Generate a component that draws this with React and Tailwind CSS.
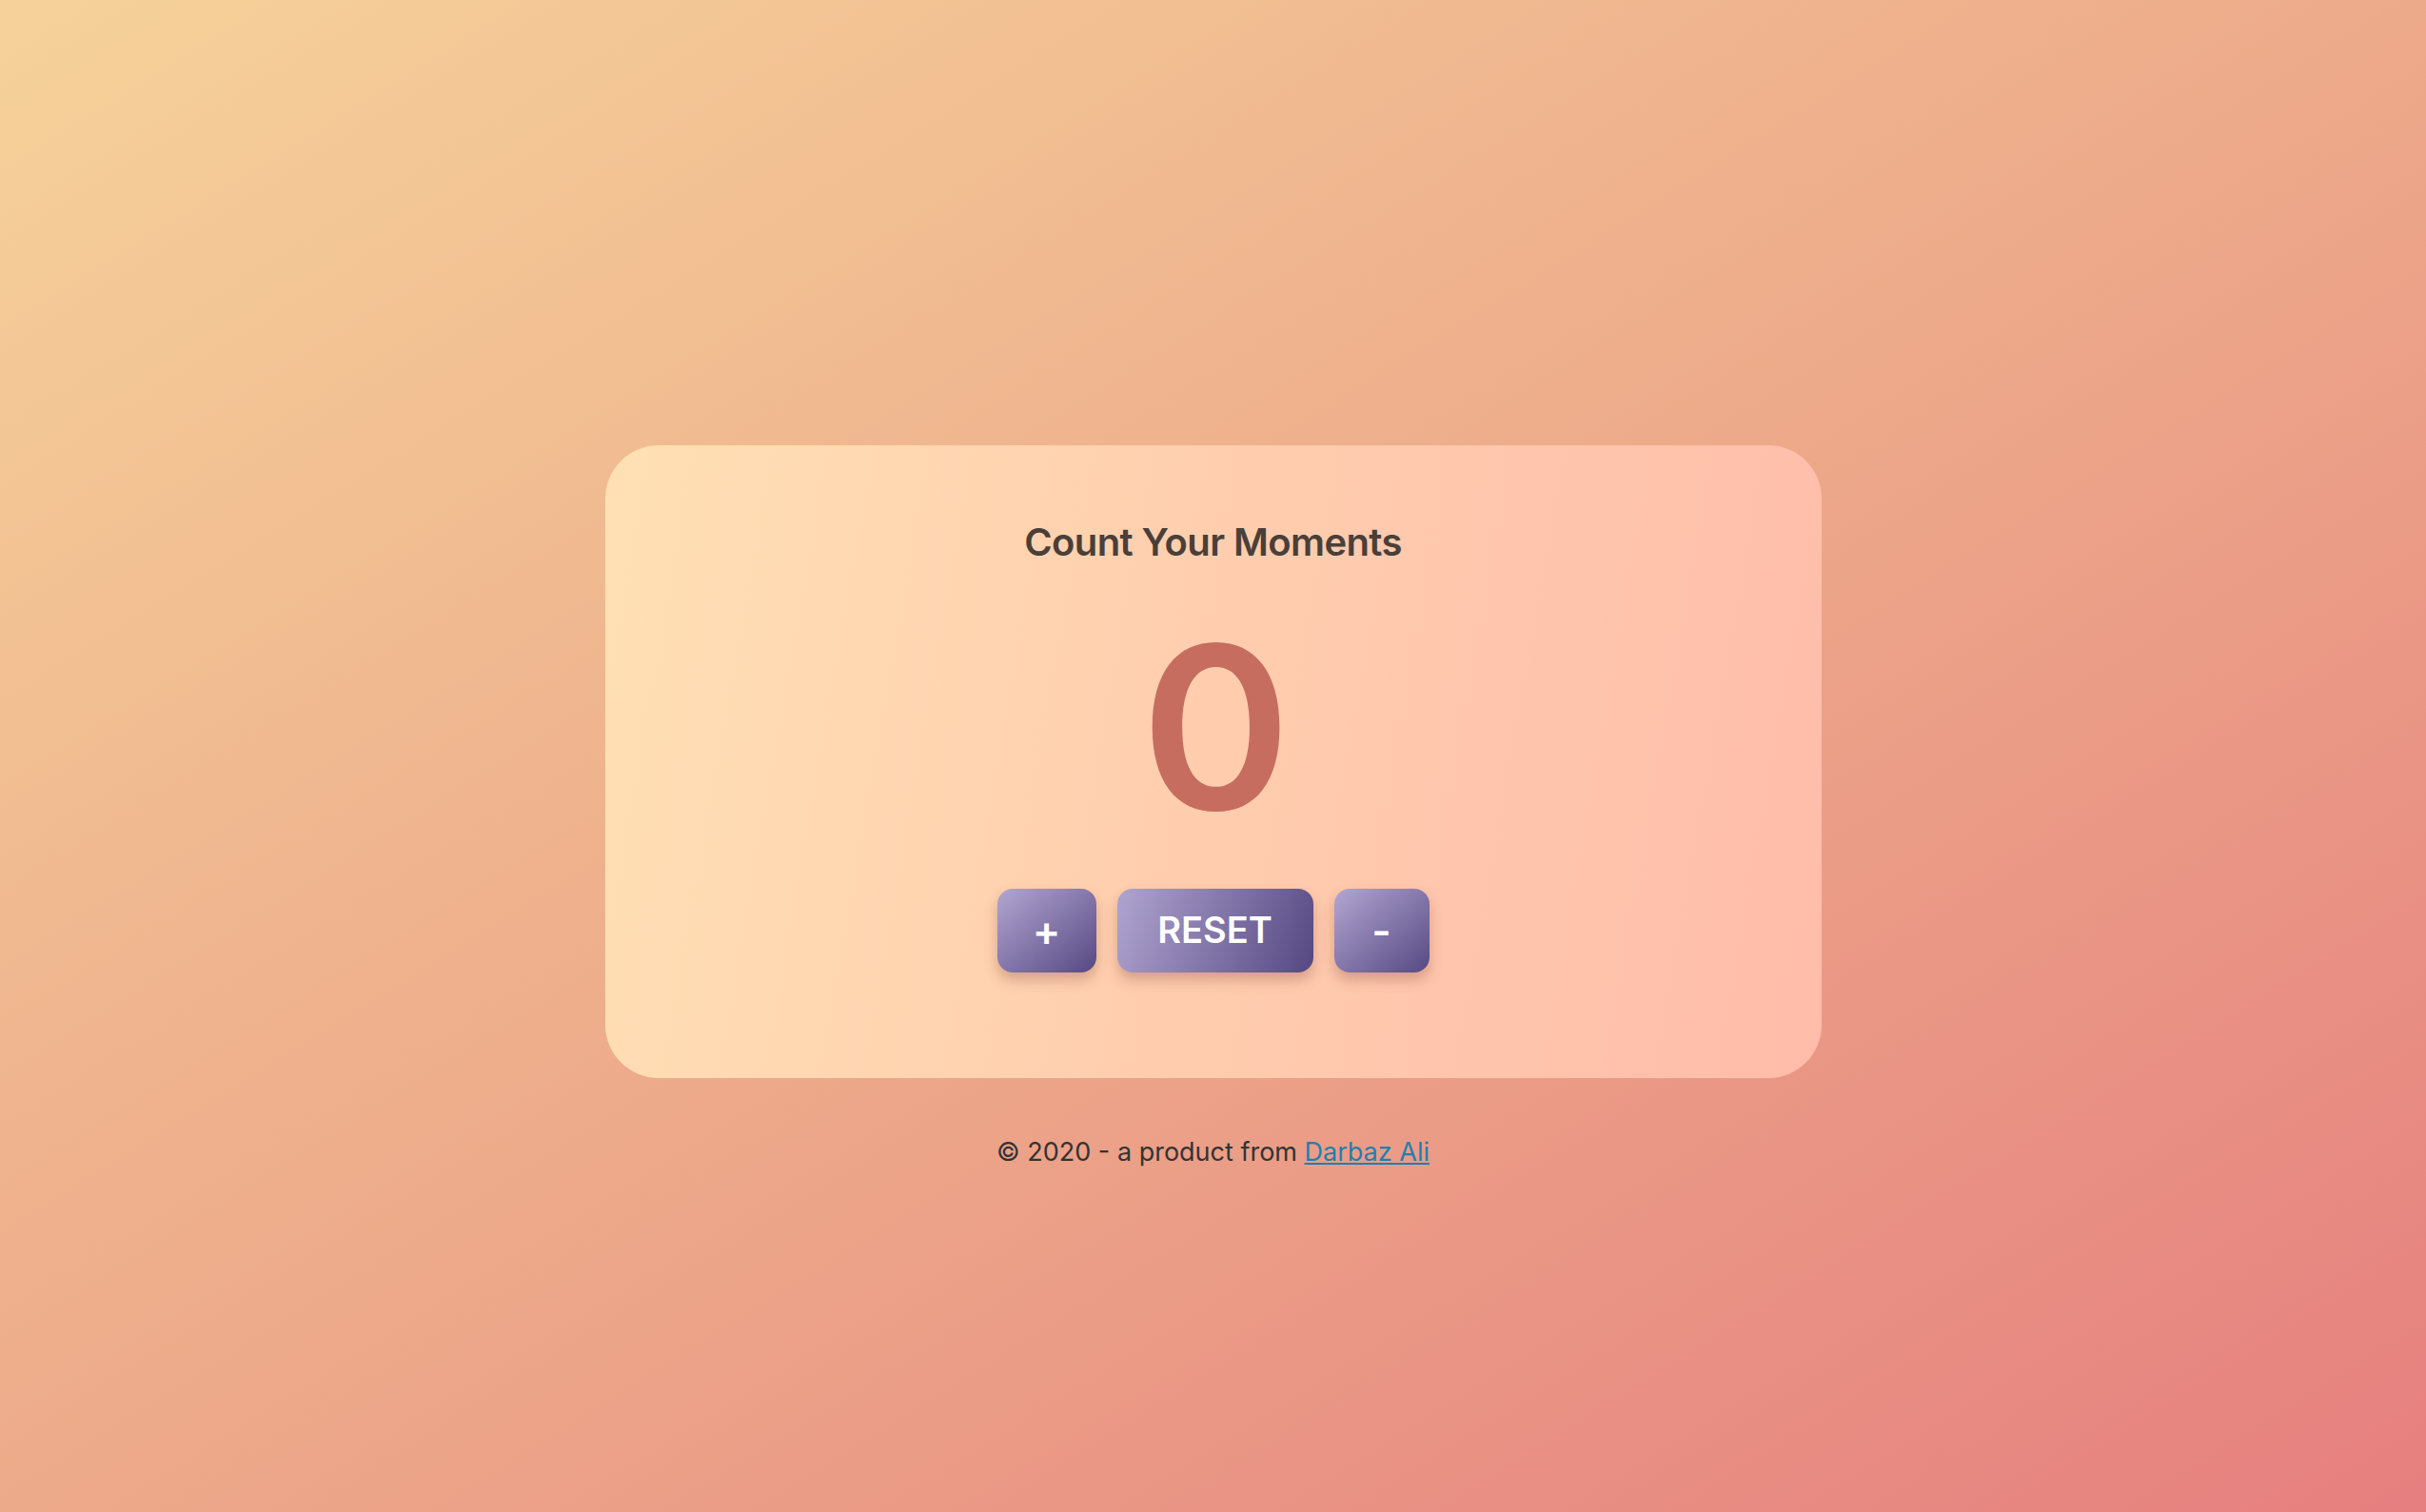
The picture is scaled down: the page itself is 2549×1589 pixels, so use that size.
import React, { useState } from "react";

const App = () => {
  const [count, setCount] = useState(0);

  return (
    <div
      className="min-h-screen w-full flex flex-col items-center justify-center pt-[110px] bg-[linear-gradient(to_bottom_right,#f6d29a,#edaa8a_50%,#e67f7f)]"
      style={{ fontFamily: "Inter, 'Noto Sans', sans-serif" }}
    >
      {/* Card */}
      <div className="w-[1278px] rounded-[56px] bg-[linear-gradient(100deg,#ffe0b4,#ffcdae_50%,#ffbcaa)] flex flex-col items-center pt-[82px] pb-[111px]">
        <h1 className="text-[40px] leading-none font-semibold text-[#4a3f39] tracking-[-0.6px]">
          Count Your Moments
        </h1>

        <div className="mt-[55px] text-[239px] leading-none font-semibold text-[#c66d60] tracking-[-6px]">
          {count}
        </div>

        <div className="mt-[50px] flex gap-[22px]">
          <button
            onClick={() => setCount(count + 1)}
            className="w-[104px] h-[88px] rounded-[16px] bg-[linear-gradient(to_bottom_right,#b2a6d1,#564983)] text-white text-[44px] font-semibold shadow-[0_8px_14px_rgba(120,60,50,0.3)]"
          >
            +
          </button>
          <button
            onClick={() => setCount(0)}
            className="w-[206px] h-[88px] rounded-[16px] bg-[linear-gradient(110deg,#b0a4d0,#554882)] text-white text-[38px] font-semibold shadow-[0_8px_14px_rgba(120,60,50,0.3)]"
          >
            RESET
          </button>
          <button
            onClick={() => setCount(count - 1)}
            className="w-[100px] h-[88px] rounded-[16px] bg-[linear-gradient(to_bottom_right,#b2a6d1,#564983)] text-white text-[44px] font-semibold shadow-[0_8px_14px_rgba(120,60,50,0.3)]"
          >
            -
          </button>
        </div>
      </div>

      {/* Footer */}
      <p className="mt-[56px] text-[27px] leading-[43px] text-[#333333]">
        © 2020 - a product from{" "}
        <a href="#" className="text-[#1f7fb2] underline">
          Darbaz Ali
        </a>
      </p>
    </div>
  );
};

export default App;
